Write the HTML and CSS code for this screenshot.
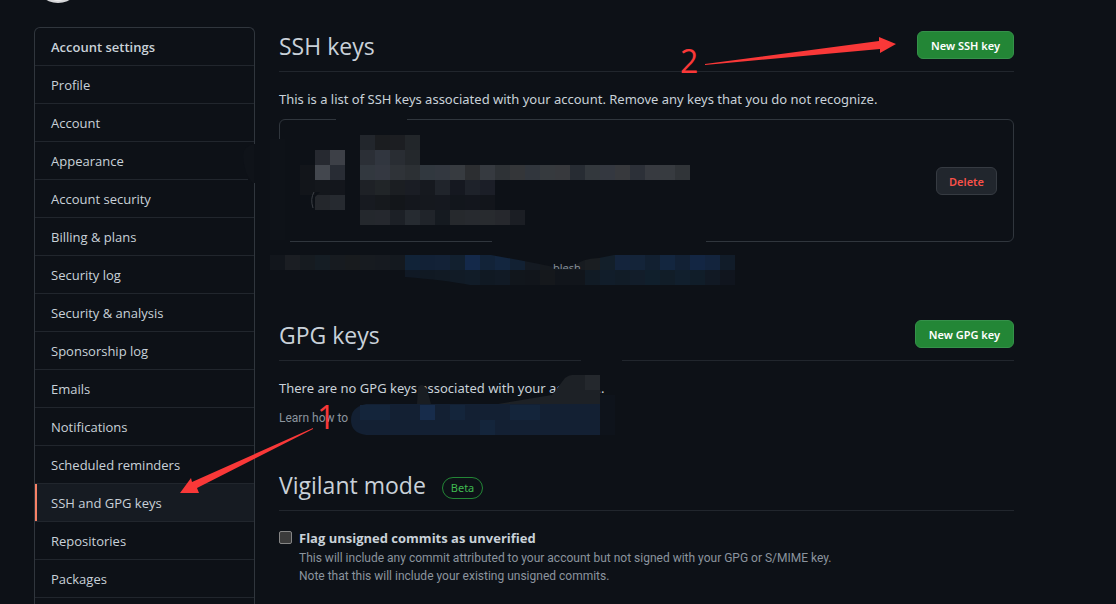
FILE: index.html
```html
<!DOCTYPE html>
<html lang="en">
<head>
<meta charset="utf-8">
<title>SSH and GPG keys</title>
<link rel="stylesheet" href="styles.css">
</head>
<body>
<header class="profile">
  <svg class="avatar" viewBox="0 0 48 3" aria-hidden="true"><circle cx="24" cy="-21" r="24" fill="#d5d6d8"/><circle cx="24" cy="-10" r="11" fill="#ececec"/></svg>
</header>
<div class="layout">
  <nav class="menu" aria-label="Account settings">
    <h2 class="menu-title">Account settings</h2>
    <a class="menu-item" href="#">Profile</a>
    <a class="menu-item" href="#">Account</a>
    <a class="menu-item" href="#">Appearance</a>
    <a class="menu-item" href="#">Account security</a>
    <a class="menu-item" href="#">Billing &amp; plans</a>
    <a class="menu-item" href="#">Security log</a>
    <a class="menu-item" href="#">Security &amp; analysis</a>
    <a class="menu-item" href="#">Sponsorship log</a>
    <a class="menu-item" href="#">Emails</a>
    <a class="menu-item" href="#">Notifications</a>
    <a class="menu-item" href="#">Scheduled reminders</a>
    <a class="menu-item selected" href="#" aria-current="page">SSH and GPG keys</a>
    <a class="menu-item" href="#">Repositories</a>
    <a class="menu-item" href="#">Packages</a>
  </nav>
  <main class="content">
    <section class="ssh">
      <div class="subhead"><h1 class="heading">SSH keys</h1><button class="btn primary" type="button">New SSH key</button></div>
      <p class="lead">This is a list of SSH keys associated with your account. Remove any keys that you do not recognize.</p>
      <div class="key-card"><button class="btn danger" type="button">Delete</button></div>
    </section>
    <section class="gpg">
      <div class="subhead"><h1 class="heading">GPG keys</h1><button class="btn primary" type="button">New GPG key</button></div>
      <p class="lead">There are no GPG keys associated with your account..</p>
      <p class="note">Learn how to</p>
    </section>
    <section class="vigilant">
      <div class="subhead"><h1 class="heading">Vigilant mode</h1><span class="label">Beta</span></div>
      <div class="option">
        <input class="check" type="checkbox" id="flag" aria-describedby="flag-note">
        <div>
          <label class="option-title" for="flag">Flag unsigned commits as unverified</label>
          <p class="option-note" id="flag-note">This will include any commit attributed to your account but not signed with your GPG or S/MIME key.<br>Note that this will include your existing unsigned commits.</p>
        </div>
      </div>
    </section>
  </main>
</div>
<svg class="annotations" viewBox="0 0 1116 604" aria-hidden="true">
  <g fill="#0d1117">
    <path d="M336 117h71v5h-71zM276 139h6v106h-6zM276 238h14v6h-14zM492 239h214v5H492zM250 144h7v39h-9v-5h2zM581 358h41v5h-41z"/>
  </g>
  <path d="M270 139h15v101h-15z" fill="#0e1218"/>
  <path d="M243 155q1-9 11-11v40q-10-8-11-29" fill="#0f1319"/>
  <g id="mosaic" shape-rendering="crispEdges"></g>
  <path d="M313 208q-3-9 1-16" fill="none" stroke="#3b3f45"/>
  <path d="M314 207v-9l6-6h-5z" fill="#0d1117"/>
  <path d="M405 277q40 3 65 8h-65z" fill="#0d1117"/>
  <path d="M491 255h123l-15 3q-18 1-23 7l-22 2q-35-7-63-12" fill="#0d1117"/>
  <clipPath id="sliver"><path d="M553 263h28v6h-28z"/></clipPath>
  <text class="fragment" x="553" y="272" clip-path="url(#sliver)">blesh</text>
  <path d="M417 404l1-17q4-5 9 2l4 15z" fill="#191d22"/>
  <path d="M498 404l54-9 13-17q4-3 7-3h28v29z" fill="#1d2126"/>
  <path d="M585 375h15v15h-15z" fill="#24282d"/>
  <path d="M366 404h234v31H366q-15-2-15-15t15-16" fill="#132033"/>
  <g shape-rendering="crispEdges"><path d="M420 405h15v15h-15z" fill="#172c4b"/><path d="M360 405h30v15h-30zM450 405h15v15h-15zM510 405h30v15h-30zM480 420h15v15h-15z" fill="#14253b"/><path d="M600 395h15v40h-15z" fill="#0e131b"/></g>
  <g fill="#f93838">
    <path d="M705 64L879 41L879 37L896 44L880 53L880 49L705 65z"/>
    <path d="M313 428L192 482L191 478L180 493L199 493L197 488L313 429z"/>
    <text class="digit" x="680" y="73">2</text>
    <text class="digit" x="317" y="429">1</text>
  </g>
</svg>
<script src="mosaic.js"></script>
</body>
</html>
```
FILE: styles.css
```css
* { box-sizing: border-box; }
body {
  display: flex;
  flex-direction: column;
  min-height: 100vh;
  margin: 0;
  position: relative;
  background: #0d1117;
  color: #c9d1d9;
  font-family: "Open Sans", "Noto Sans", sans-serif;
  font-size: 13px;
  line-height: 21px;
}
h1, h2, p { margin: 0; }
.profile { height: 27px; padding-left: 34px; }
.avatar { display: block; width: 48px; height: 3px; }
.layout { flex: 1; display: flex; gap: 24px; padding: 0 102px 0 34px; }
.menu { flex: 0 0 221px; border: 1px solid #30363d; border-bottom: 0; border-radius: 6px 6px 0 0; overflow: hidden; }
.menu-title, .menu-item {
  display: block;
  height: 38px;
  padding: 9px 16px 7px;
  border-bottom: 1px solid #21262d;
  color: #c9d1d9;
  font-size: 13px;
  line-height: 21px;
  text-decoration: none;
}
.menu-title { font-weight: 600; }
.selected { background: #161b22; box-shadow: inset 2px 0 #f78166; }
.content { flex: 1; min-width: 0; padding-top: 4px; }
.subhead {
  display: flex;
  align-items: flex-start;
  height: 41px;
  border-bottom: 1px solid #21262d;
  margin-bottom: 16px;
}
.heading { font-size: 23px; font-weight: 400; line-height: 30px; }
.btn { font: 600 11px/16px "Noto Sans", sans-serif; padding: 6px 12px 4px; border: 1px solid; border-radius: 6px; }
.primary { margin-left: auto; padding-left: 13px; padding-right: 13px; background: #238636; border-color: #35914a; color: #fff; }
.danger { background: #21262d; border-color: #363b42; color: #f85149; }
.lead { font-family: "Noto Sans", sans-serif; font-size: 13px; line-height: 22px; }
.key-card {
  display: flex;
  align-items: center;
  justify-content: flex-end;
  height: 123px;
  margin-top: 9px;
  padding: 0 16px;
  border: 1px solid #30363d;
  border-radius: 6px;
}
.gpg { margin-top: 78px; }
.note { margin-top: 9px; color: #8b949e; font: 12px/21px Roboto, sans-serif; }
.vigilant { margin-top: 41px; }
.label { margin: 7px 0 0 16px; padding: 0 8px; border: 1px solid #238636; border-radius: 20px; color: #3fb950; font: 11px/20px "Noto Sans", sans-serif; }
.option { display: flex; gap: 7px; }
.check { appearance: none; width: 13px; height: 13px; margin: 4px 0 0; background: #3b3b3b; border: 1px solid #858585; border-radius: 2px; }
.option-title { display: block; font-size: 13px; font-weight: 700; line-height: 22px; }
.option-note { color: #8b949e; font: 12px/18px Roboto, sans-serif; }
.annotations { position: absolute; left: 0; top: 0; width: 1116px; height: 604px; pointer-events: none; }
.digit { font: 32px "Open Sans", sans-serif; }
.fragment { font: 11px "Open Sans", sans-serif; fill: #8b949e; }
```
FILE: mosaic.js
```js
// Each row: left, top, then one colour per 15px block.
const rows = [
  [360, 135, '22262c 1b1d20 1c1e22 22262a'],
  [315, 150, '262930 3d4047'],
  [360, 150, '2b2f36 31363f 292d33 24282c'],
  [300, 165, '12151a 43474e 282c34'],
  [360, 165, '32383f 343841 2f3338 2c3034 31383f 333840 373b40 2c2e31 363a40 2e3236 343639 31363d 363a3e 37393d 272c33 33383d 343840 37393d 2c3038 373a40 373b40 303438'],
  [300, 180, '12151a 14171c 13161c'],
  [360, 180, '1e2126 212528 1b1e22 1a1d24 16191f 20242b 151820 1e222a 1b1e27'],
  [315, 195, '24272c 262a30'],
  [360, 195, '171a20 16191d 13161a 14171d 15181e 15181f 12161c 13161d 12151b'],
  [360, 210, '24282d 25282e 1c2026 262b31 20242a 151a20 26292d 272a2f 282b2f 26282d 1b1e24'],
  [270, 255, '12161c 1b1e23 161b20 151d24 171b20 181b1e 171b20 161a20 14191f 112338 122136 132237 12202f 14294a 122338 13263f 122133 141a22 15191e 151b21 171b20 1a1e22 131f2a 14243c 142439 122031 13263f 122135 132643 13243d 111c29'],
  [405, 270, '101925 101923 111a24 111b26 111c28 101923 111a25 11161c 11151b 15181c 11151b 11151b 111b25 111d2a 111c27 121d2a 101f2c 111d28 111f2d 101d29 111924 10151e']
];
const layer = document.getElementById('mosaic');
for (const [left, top, colours] of rows) {
  colours.split(' ').forEach((colour, i) => {
    const block = document.createElementNS('http://www.w3.org/2000/svg', 'rect');
    block.setAttribute('x', left + i * 15);
    block.setAttribute('y', top);
    block.setAttribute('width', 15);
    block.setAttribute('height', 15);
    block.setAttribute('fill', '#' + colour);
    layer.append(block);
  });
}
```
